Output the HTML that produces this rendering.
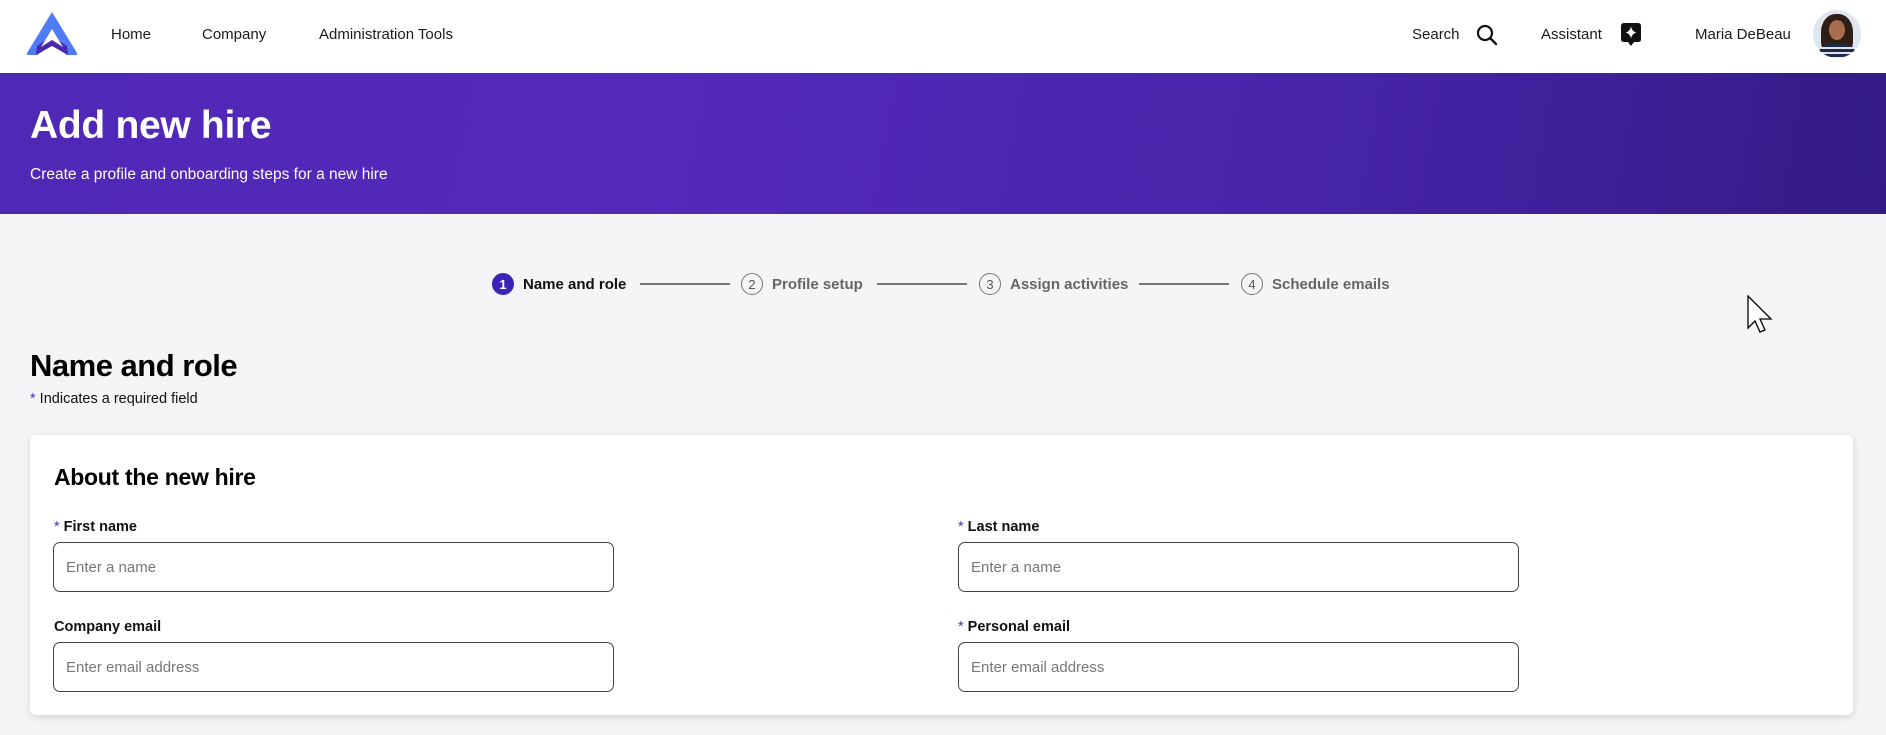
<!DOCTYPE html>
<html><head><meta charset="utf-8"><style>
*{box-sizing:border-box;margin:0;padding:0}
body{width:1886px;height:735px;overflow:hidden;background:#f5f5f7;font-family:"Liberation Sans",sans-serif;color:#111;position:relative}
.nav{position:absolute;left:0;top:0;width:1886px;height:73px;background:#fff}
.nav .t{position:absolute;top:26px;font-size:15px;color:#1a1a1a}
.banner{position:absolute;left:0;top:73px;width:1886px;height:141px;background:linear-gradient(100deg,#5028b6 0%,#5329bb 35%,#4724a8 70%,#331b85 100%)}
.banner h1{position:absolute;left:30px;top:31px;font-size:39px;color:#fff;font-weight:bold;letter-spacing:-0.3px}
.banner p{position:absolute;left:30px;top:93px;font-size:15.5px;color:#fff}
.step{position:absolute;top:273px;height:22px;display:flex;align-items:center;font-size:15px;color:#666;font-weight:bold}
.c{width:22px;height:22px;border-radius:50%;border:1.3px solid #777;display:flex;align-items:center;justify-content:center;font-size:13px;font-weight:normal;color:#555;margin-right:9px}
.line{position:absolute;top:283px;height:1.5px;background:#777}
.card{position:absolute;left:30px;top:435px;width:1823px;height:280px;background:#fff;border-radius:6px;box-shadow:0 2px 8px rgba(0,0,0,.15)}
.lbl{position:absolute;font-size:14.5px;font-weight:bold;color:#111}
.lbl s{text-decoration:none;color:#4a2fc0;font-weight:normal;margin-right:4px}
.in{position:absolute;width:561px;height:50px;border:1.3px solid #444;border-radius:7px;font-size:15px;color:#777;padding:16px 0 0 12px}
</style></head><body>
<div class="nav">
<svg style="position:absolute;left:26px;top:11px" width="52" height="44" viewBox="0 0 52 44"><path d="M26 1 L51 42 Q52 44 49 44 L41 44 L26 34 L11 44 L3 44 Q0 44 1 42 Z" fill="#4f7cf4"/><path d="M26 25 L41 35 L42 44 L26 35 L10 44 L11 35 Z" fill="#4a28b0"/><path d="M26 18 L37 36 L26 29 L15 36 Z" fill="#fff"/></svg>
<span class="t" style="left:111px">Home</span>
<span class="t" style="left:202px">Company</span>
<span class="t" style="left:319px">Administration Tools</span>
<span class="t" style="left:1412px">Search</span>
<svg style="position:absolute;left:1476px;top:24px" width="22" height="22" viewBox="0 0 22 22"><circle cx="9" cy="9" r="7" fill="none" stroke="#111" stroke-width="2.2"/><path d="M14 14 L20 20" stroke="#111" stroke-width="2.4" stroke-linecap="round"/></svg>
<span class="t" style="left:1541px">Assistant</span>
<svg style="position:absolute;left:1621px;top:23px" width="20" height="24" viewBox="0 0 20 24"><path d="M3 0 H17 Q20 0 20 3 V16 Q20 19 17 19 H13 L10 23 L7 19 H3 Q0 19 0 16 V3 Q0 0 3 0Z" fill="#111"/><path d="M10 3.5 Q11 8.5 15.5 9.5 Q11 10.5 10 15.5 Q9 10.5 4.5 9.5 Q9 8.5 10 3.5Z" fill="#fff"/></svg>
<span class="t" style="left:1695px">Maria DeBeau</span>
<div style="position:absolute;left:1813px;top:10px;width:48px;height:48px;border-radius:50%;overflow:hidden;background:#dfe6ee">
<div style="position:absolute;left:8px;top:4px;width:32px;height:40px;border-radius:45% 45% 30% 30%;background:#2e1e16"></div>
<div style="position:absolute;left:16px;top:10px;width:16px;height:20px;border-radius:50%;background:#a86d4e"></div>
<div style="position:absolute;left:6px;top:34px;width:36px;height:20px;border-radius:40% 40% 0 0;background:repeating-linear-gradient(#1e2a4a 0 3px,#e0e4ea 3px 5px)"></div>
</div>
</div>
<div class="banner"><h1>Add new hire</h1><p>Create a profile and onboarding steps for a new hire</p></div>

<div class="step" style="left:492px;color:#111"><span class="c" style="background:#3d23b5;border-color:#3d23b5;color:#fff;font-weight:bold">1</span>Name and role</div>
<div class="line" style="left:640px;width:90px"></div>
<div class="step" style="left:741px"><span class="c">2</span>Profile setup</div>
<div class="line" style="left:877px;width:90px"></div>
<div class="step" style="left:979px"><span class="c">3</span>Assign activities</div>
<div class="line" style="left:1139px;width:90px"></div>
<div class="step" style="left:1241px"><span class="c">4</span>Schedule emails</div>

<svg style="position:absolute;left:1747px;top:295px" width="26" height="40" viewBox="0 0 26 40"><path d="M1 1 L1 33 L8 26 L13 37 L18 35 L13 24 L24 24 Z" fill="#fff" stroke="#000" stroke-width="1.3"/></svg>

<div style="position:absolute;left:30px;top:348px;font-size:31px;font-weight:bold;color:#000;letter-spacing:-0.5px">Name and role</div>
<div style="position:absolute;left:30px;top:391px;font-size:14.5px;color:#111"><span style="color:#4a2fc0">*</span> Indicates a required field</div>

<div class="card">
<div style="position:absolute;left:24px;top:29px;font-size:23px;font-weight:bold;color:#000;letter-spacing:-0.3px">About the new hire</div>
<div class="lbl" style="left:24px;top:84px"><s>*</s>First name</div>
<div class="in" style="left:23px;top:107px">Enter a name</div>
<div class="lbl" style="left:928px;top:84px"><s>*</s>Last name</div>
<div class="in" style="left:928px;top:107px">Enter a name</div>
<div class="lbl" style="left:24px;top:184px">Company email</div>
<div class="in" style="left:23px;top:207px">Enter email address</div>
<div class="lbl" style="left:928px;top:184px"><s>*</s>Personal email</div>
<div class="in" style="left:928px;top:207px">Enter email address</div>
</div>
</body></html>
